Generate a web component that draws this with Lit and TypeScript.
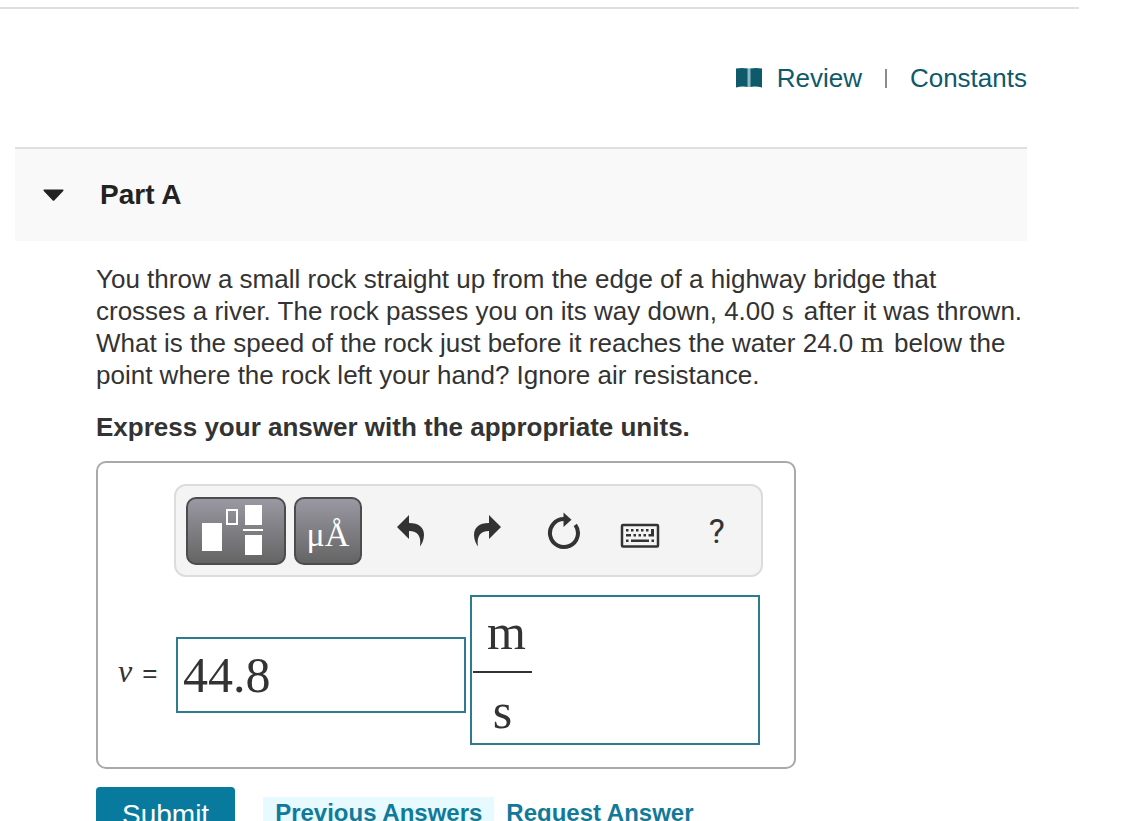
import { LitElement, html, css } from "lit";
import { customElement, state } from "lit/decorators.js";

@customElement("answer-toolbar")
class AnswerToolbar extends LitElement {
  static styles = css`
    :host {
      display: block;
    }
    .bar {
      display: flex;
      align-items: center;
      padding: 11px 6px 10px 10px;
      border: 2px solid #dcdcdc;
      border-radius: 12px;
      background: #f4f4f4;
    }
    button {
      display: flex;
      align-items: center;
      justify-content: center;
      margin: 0;
      padding: 0;
      font: inherit;
      color: #333;
      cursor: pointer;
    }
    svg {
      display: block;
    }
    .palettes {
      display: flex;
      gap: 8px;
    }
    .palette {
      box-sizing: border-box;
      height: 68px;
      border: 2px solid #4c4c4e;
      border-radius: 10px;
      background: linear-gradient(#9a98a2, #646464);
      color: #fff;
    }
    .templates {
      width: 100px;
    }
    .symbols {
      width: 68px;
      padding-top: 8px;
      font: 34px/40px "Liberation Serif", "Times New Roman", serif;
    }
    .actions {
      flex: 1;
      display: grid;
      grid-template-columns: repeat(5, 1fr);
      padding-left: 11px;
    }
    .action {
      height: 68px;
      border: 0;
      background: none;
    }
    .help {
      font: 34px/40px Roboto, sans-serif;
    }
  `;

  render() {
    return html`
      <div class="bar" role="toolbar" aria-label="Equation editor">
        <div class="palettes">
          <button class="palette templates" type="button" aria-label="Templates">
            <svg width="96" height="64" viewBox="0 0 96 64" fill="#fff">
              <path d="M14 24h20v28H14zM57 6h17v20H57zM55 30h20v2H55zM57 36h17v20H57z" />
              <path d="M39 11h10v14H39z" fill="none" stroke="#fff" stroke-width="2" />
            </svg>
          </button>
          <button class="palette symbols" type="button" aria-label="Symbols">μÅ</button>
        </div>
        <div class="actions">
          <button class="action" type="button" aria-label="Undo">
            <svg width="30" height="34" viewBox="0 0 30 34" fill="#333">
              <path d="M1 13 13 1V9C23 9 28 13.500 28 21C28 25.500 26 30 24 32.500C25.500 22.500 22 17 13 17V25Z" />
            </svg>
          </button>
          <button class="action" type="button" aria-label="Redo">
            <svg width="30" height="34" viewBox="0 0 30 34" fill="#333">
              <path d="M28 13 16 1V9C6 9 1 13.500 1 21C1 25.500 3 30 5 32.500C3.500 22.500 7 17 16 17V25Z" />
            </svg>
          </button>
          <button class="action" type="button" aria-label="Reset">
            <svg width="34" height="38" viewBox="0 0 34 38">
              <path d="M28.300 12.800A14 14 0 1 1 17 7" fill="none" stroke="#333" stroke-width="4" />
              <path d="M16.500 0.500 24.500 7.800 16.500 15Z" fill="#333" />
            </svg>
          </button>
          <button class="action" type="button" aria-label="Keyboard shortcuts">
            <svg width="40" height="34" viewBox="0 -2 40 34">
              <rect x="2" y="9" width="36" height="21.500" rx="1" fill="none" stroke="#333" stroke-width="2.500" />
              <path
                d="M6 13h2.500v2.500H6zM11 13h2.500v2.500H11zM16 13h2.500v2.500H16zM21 13h2.500v2.500H21zM26 13h2.500v2.500H26zM31 13h3v7.500H28.500V18H31zM6 18h5v2.500H6zM13.500 18H16v2.500H13.500zM18.500 18H21v2.500H18.500zM23.500 18H26v2.500H23.500zM6 23.500h2.500V26H6zM11 23.500h18V26H11zM31.500 23.500H34V26H31.500z"
                fill="#333"
              />
            </svg>
          </button>
          <button class="action help" type="button" aria-label="Help">?</button>
        </div>
      </div>
    `;
  }
}

@customElement("app-root")
class AppRoot extends LitElement {
  @state() open = true;

  static styles = css`
    :host {
      display: block;
      box-sizing: border-box;
      height: 100vh;
      overflow: hidden;
      padding-top: 7px;
      background: #fff;
      color: #333;
      font: 26px/32px "Liberation Sans", Helvetica, Arial, sans-serif;
    }
    a {
      text-decoration: none;
    }
    .page {
      margin-right: 47px;
      border-top: 2px solid #dfdfdf;
    }
    .content {
      padding: 53px 52px 0 15px;
    }
    .links {
      display: flex;
      justify-content: flex-end;
      align-items: center;
    }
    .links a {
      display: flex;
      align-items: center;
      gap: 15px;
      color: #0e5a6b;
    }
    .divider {
      width: 2px;
      height: 19px;
      margin: 0 23px;
      background: #8c8c8c;
    }
    .part {
      display: flex;
      align-items: center;
      margin-top: 53px;
      border-top: 2px solid #dfdfdf;
      background: #f9f9f9;
    }
    .toggle {
      display: flex;
      align-items: center;
      gap: 36px;
      flex: 1;
      margin: 0;
      padding: 30px 28px;
      border: 0;
      background: none;
      color: #222;
      font: inherit;
      font-size: 28px;
      font-weight: bold;
      cursor: pointer;
    }
    h2 {
      flex: 1;
      display: flex;
      margin: 0;
    }
    .body {
      padding: 22px 0 0 81px;
    }
    p {
      margin: 0;
    }
    .unit {
      margin-right: 3px;
      font: 30px/24px "Liberation Serif", "Times New Roman", serif;
    }
    .instruction {
      margin-top: 20px;
      font-weight: bold;
    }
    .editor {
      box-sizing: border-box;
      max-width: 700px;
      margin-top: 18px;
      padding: 21px 31px 22px 20px;
      border: 2px solid #a9a9a9;
      border-radius: 10px;
    }
    answer-toolbar {
      margin-left: 56px;
    }
    .row {
      display: grid;
      grid-template-columns: 54px 1fr 1fr;
      align-items: center;
      gap: 4px;
      margin: 18px 3px 0 0;
    }
    .label {
      display: flex;
      align-items: baseline;
      gap: 10px;
      padding-top: 4px;
    }
    .var {
      font: italic 32px/32px "Liberation Serif", "Times New Roman", serif;
    }
    .value,
    .fraction {
      box-sizing: border-box;
      width: 100%;
      min-width: 0;
      border: 2px solid #2b7b91;
      background: #fff;
    }
    .value {
      height: 76px;
      margin: 10px 0 0;
      padding: 0 5px;
    }
    .fraction {
      height: 150px;
    }
    input {
      color: #333;
      font: 50px/56px "Liberation Serif", "Times New Roman", serif;
    }
    .terms {
      display: flex;
      flex-direction: column;
      width: 59px;
      margin-left: 1px;
    }
    .terms input {
      box-sizing: border-box;
      width: 100%;
      height: 72px;
      margin: 0;
      padding: 4px 0 0;
      border: 0;
      background: none;
      text-align: center;
      outline: none;
    }
    .terms .numerator {
      height: 76px;
      padding: 0 0 4px 8px;
      border-bottom: 2px solid #333;
    }
    .footer {
      display: flex;
      align-items: center;
      margin-top: 18px;
    }
    .submit {
      margin: 0 28px 0 0;
      padding: 12px 26px;
      border: 0;
      border-radius: 4px;
      background: #077a9e;
      color: #fff;
      font: inherit;
      font-size: 28px;
      cursor: pointer;
    }
    .footer a {
      color: #127a99;
      font-size: 24px;
      font-weight: bold;
      padding: 0 12px 4px;
    }
    .footer .previous {
      background: #e6faff;
    }
  `;

  render() {
    return html`
      <main class="page">
        <div class="content">
          <nav class="links">
            <a href="#review">
              <svg width="26" height="22" viewBox="0 0 26 22" aria-hidden="true">
                <path d="M0 1.500Q6 0.500 12 1.500V20Q6 19 0 20.500ZM14 1.500Q20 0.500 26 1.500V20.500Q20 19 14 20Z" fill="#0e5a6b" />
                <path d="M11.500 1.500h3v18.500h-3z" fill="#8fb9c4" />
              </svg>
              Review
            </a>
            <span class="divider"></span>
            <a href="#constants">Constants</a>
          </nav>

          <section>
            <header class="part">
              <h2>
                <button class="toggle" type="button" aria-expanded=${this.open} @click=${() => (this.open = !this.open)}>
                  <svg width="21" height="13" viewBox="0 0 21 13" aria-hidden="true">
                    <path d="M1.500 0.500H19.500Q21.500 0.500 20 2.200L11.500 11.200Q10.500 12.300 9.500 11.200L1 2.200Q-0.500 0.500 1.500 0.500Z" fill="#222" />
                  </svg>
                  Part A
                </button>
              </h2>
            </header>
            ${this.open ? this.question() : null}
          </section>
        </div>
      </main>
    `;
  }

  question() {
    return html`
      <div class="body">
        <p>
          You throw a small rock straight up from the edge of a highway bridge that crosses a river. The rock passes you
          on its way down, 4.00 <span class="unit">s</span> after it was thrown. What is the speed of the rock just
          before it reaches the water 24.0 <span class="unit">m</span> below the point where the rock left your hand?
          Ignore air resistance.
        </p>
        <p class="instruction">Express your answer with the appropriate units.</p>
        <form @submit=${(e: Event) => e.preventDefault()}>
          <div class="editor">
            <answer-toolbar></answer-toolbar>
            <div class="row">
              <label class="label" for="value"><span class="var">v</span><span>=</span></label>
              <input class="value" id="value" type="text" value="44.8" />
              <div class="fraction" role="group" aria-label="Units">
                <div class="terms">
                  <input class="numerator" type="text" value="m" aria-label="Units numerator" />
                  <input type="text" value="s" aria-label="Units denominator" />
                </div>
              </div>
            </div>
          </div>
          <div class="footer">
            <button class="submit" type="submit">Submit</button>
            <a class="previous" href="#previous">Previous Answers</a>
            <a href="#request">Request Answer</a>
          </div>
        </form>
      </div>
    `;
  }
}
